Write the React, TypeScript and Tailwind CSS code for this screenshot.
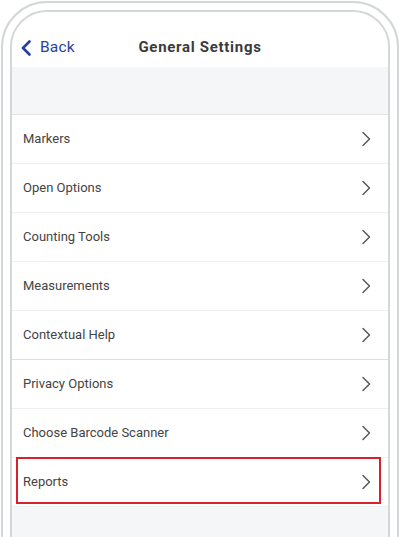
import React from "react";

const items = [
  "Markers",
  "Open Options",
  "Counting Tools",
  "Measurements",
  "Contextual Help",
  "Privacy Options",
  "Choose Barcode Scanner",
  "Reports",
];

function Chevron() {
  return (
    <svg width="10" height="16" viewBox="0 0 10 16" fill="none">
      <path d="M2 1.5 L8.5 8 L2 14.5" stroke="#555a5e" strokeWidth="1.5" strokeLinecap="round" strokeLinejoin="round" />
    </svg>
  );
}

export default function App() {
  return (
    <div className="w-[400px] h-[537px] overflow-hidden bg-white" style={{ fontFamily: "Roboto, 'Liberation Sans', sans-serif" }}>
      <div className="mt-[1px] ml-[1px] w-[398px] h-[560px] border-2 border-[#d3d7d7] rounded-t-[46px] pt-[7px] px-[7px]">
        <div className="h-[560px] border-2 border-[#d3d7d7] rounded-t-[37px] overflow-hidden bg-[#f5f6f7] flex flex-col">
          <div className="h-[55px] bg-white flex items-center pt-[16px] relative shrink-0">
            <div className="flex items-center gap-[8px] pl-[8px] text-[#2740a0] text-[15.5px] tracking-[0.2px]">
              <svg width="12" height="16" viewBox="0 0 12 16" fill="none">
                <path d="M9.5 1.5 L3 8 L9.5 14.5" stroke="#2740a0" strokeWidth="2.6" strokeLinecap="round" strokeLinejoin="round" />
              </svg>
              <span>Back</span>
            </div>
            <div className="absolute left-0 right-0 top-[16px] bottom-0 flex items-center justify-center text-[15px] font-bold text-[#3b3b3b] tracking-[0.7px] pointer-events-none">
              General Settings
            </div>
          </div>
          <div className="h-[48px] border-b border-[#e3e5e6] shrink-0" />
          <div className="bg-white">
            {items.map((it, i) => (
              <div key={it} className="relative">
                <div className={`h-[49px] flex items-center justify-between pl-[11px] pr-[17px] border-b ${i === 4 ? "border-[#dcdedf]" : "border-[#eeeff0]"}`}>
                  <span className="text-[13px] text-[#444444]">{it}</span>
                  <Chevron />
                </div>
                {it === "Reports" && (
                  <div className="absolute left-[4px] right-[7px] top-[-1px] h-[47px] border-2 border-[#d8212c]" />
                )}
              </div>
            ))}
          </div>
        </div>
      </div>
    </div>
  );
}
